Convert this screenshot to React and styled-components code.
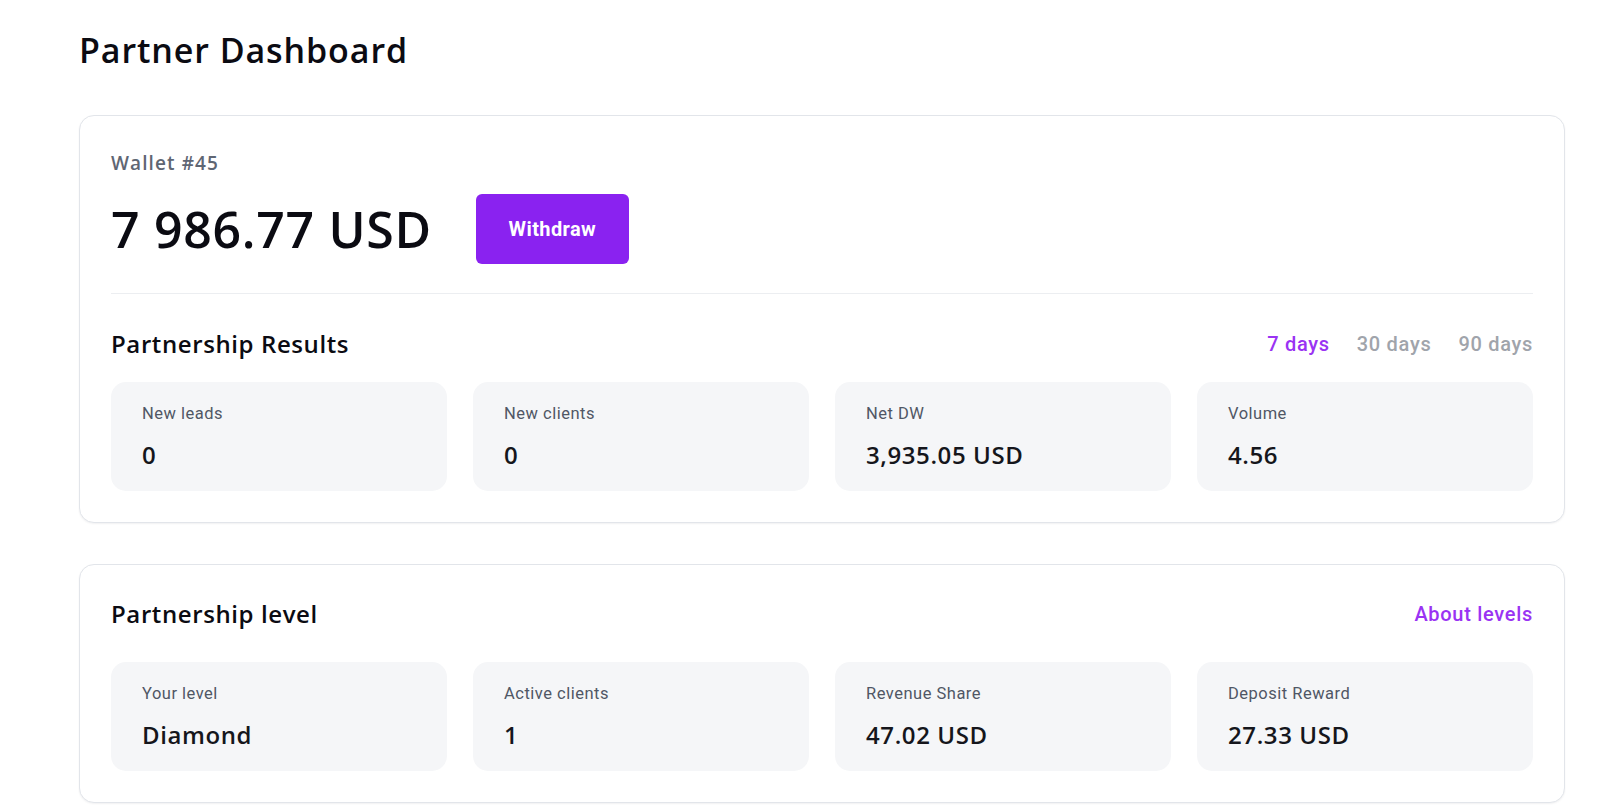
import React, { useState } from 'react';
import styled, { createGlobalStyle } from 'styled-components';

const GlobalStyle = createGlobalStyle`
  body {
    margin: 0;
    background: #fff;
    font-family: Roboto, "Liberation Sans", sans-serif;
    color: #0b0b12;
  }
`;

const HEAD_FONT = `"Open Sans", "Noto Sans", sans-serif`;

const Page = styled.div`
  padding: 28px 0 0 79px;
  width: 1486px;
`;

const Title = styled.h1`
  margin: 0 0 43px;
  font-family: ${HEAD_FONT};
  font-size: 34px;
  line-height: 44px;
  font-weight: 600;
  letter-spacing: 0.9px;
`;

const Card = styled.section`
  border: 1px solid #e2e5ea;
  border-radius: 15px;
  box-shadow: 0 1px 2px rgba(16, 24, 40, 0.06);
  padding: ${(p) => p.padding || '35px 31px 31px'};
  margin-bottom: 41px;
  background: #fff;
`;

const WalletLabel = styled.div`
  font-family: ${HEAD_FONT};
  font-size: 19px;
  line-height: 24px;
  font-weight: 600;
  color: #5f6673;
  letter-spacing: 1.1px;
`;

const BalanceRow = styled.div`
  display: flex;
  align-items: center;
  gap: 44px;
  margin-top: 19px;
  height: 70px;
`;

const Balance = styled.div`
  font-family: ${HEAD_FONT};
  font-size: 50px;
  font-weight: 600;
  line-height: 60px;
  letter-spacing: 0.7px;
`;

const WithdrawButton = styled.button`
  width: 153px;
  height: 70px;
  border: none;
  border-radius: 6px;
  background: #8a22f0;
  color: #fff;
  font-family: Roboto, "Liberation Sans", sans-serif;
  font-size: 20px;
  font-weight: 700;
  letter-spacing: 0.4px;
  cursor: pointer;
`;

const Divider = styled.hr`
  border: none;
  border-top: 1px solid #eceef1;
  margin: 29px 0 35px;
`;

const SectionHead = styled.div`
  display: flex;
  align-items: center;
  justify-content: space-between;
  height: 30px;
  margin-bottom: ${(p) => p.gap || '23px'};
`;

const SectionTitle = styled.h2`
  margin: 0;
  font-family: ${HEAD_FONT};
  font-size: 24px;
  font-weight: 600;
  line-height: 30px;
  letter-spacing: 0.6px;
`;

const Tabs = styled.div`
  display: flex;
  gap: 27px;
`;

const Tab = styled.button`
  border: none;
  background: none;
  padding: 0;
  font-family: Roboto, "Liberation Sans", sans-serif;
  font-size: 20px;
  font-weight: 500;
  letter-spacing: 0.7px;
  color: ${(p) => (p.$active ? '#9a33f3' : '#a0a4ab')};
  cursor: pointer;
`;

const LinkText = styled.a`
  font-family: Roboto, "Liberation Sans", sans-serif;
  font-size: 20px;
  font-weight: 500;
  letter-spacing: 0.7px;
  color: #9a33f3;
  text-decoration: none;
  cursor: pointer;
`;

const StatGrid = styled.div`
  display: grid;
  grid-template-columns: repeat(4, 1fr);
  gap: 26px;
`;

const StatBox = styled.div`
  height: 109px;
  box-sizing: border-box;
  padding: 22px 31px;
  background: #f5f6f8;
  border-radius: 15px;
`;

const StatLabel = styled.div`
  font-size: 16.5px;
  line-height: 20px;
  letter-spacing: 0.5px;
  color: #505765;
`;

const StatValue = styled.div`
  margin-top: 16px;
  font-family: ${HEAD_FONT};
  font-size: 24px;
  font-weight: 600;
  line-height: 30px;
  letter-spacing: 0.6px;
  color: #15161c;
`;

const results = [
  { label: 'New leads', value: '0' },
  { label: 'New clients', value: '0' },
  { label: 'Net DW', value: '3,935.05 USD' },
  { label: 'Volume', value: '4.56' },
];

const level = [
  { label: 'Your level', value: 'Diamond' },
  { label: 'Active clients', value: '1' },
  { label: 'Revenue Share', value: '47.02 USD' },
  { label: 'Deposit Reward', value: '27.33 USD' },
];

const Stats = ({ items }) => (
  <StatGrid>
    {items.map((item) => (
      <StatBox key={item.label}>
        <StatLabel>{item.label}</StatLabel>
        <StatValue>{item.value}</StatValue>
      </StatBox>
    ))}
  </StatGrid>
);

export default function App() {
  const [period, setPeriod] = useState('7 days');

  return (
    <Page>
      <GlobalStyle />
      <Title>Partner Dashboard</Title>

      <Card>
        <WalletLabel>Wallet #45</WalletLabel>
        <BalanceRow>
          <Balance>7 986.77 USD</Balance>
          <WithdrawButton>Withdraw</WithdrawButton>
        </BalanceRow>
        <Divider />
        <SectionHead>
          <SectionTitle>Partnership Results</SectionTitle>
          <Tabs>
            {['7 days', '30 days', '90 days'].map((p) => (
              <Tab key={p} $active={period === p} onClick={() => setPeriod(p)}>
                {p}
              </Tab>
            ))}
          </Tabs>
        </SectionHead>
        <Stats items={results} />
      </Card>

      <Card padding="34px 31px 31px">
        <SectionHead gap="33px">
          <SectionTitle>Partnership level</SectionTitle>
          <LinkText>About levels</LinkText>
        </SectionHead>
        <Stats items={level} />
      </Card>
    </Page>
  );
}
